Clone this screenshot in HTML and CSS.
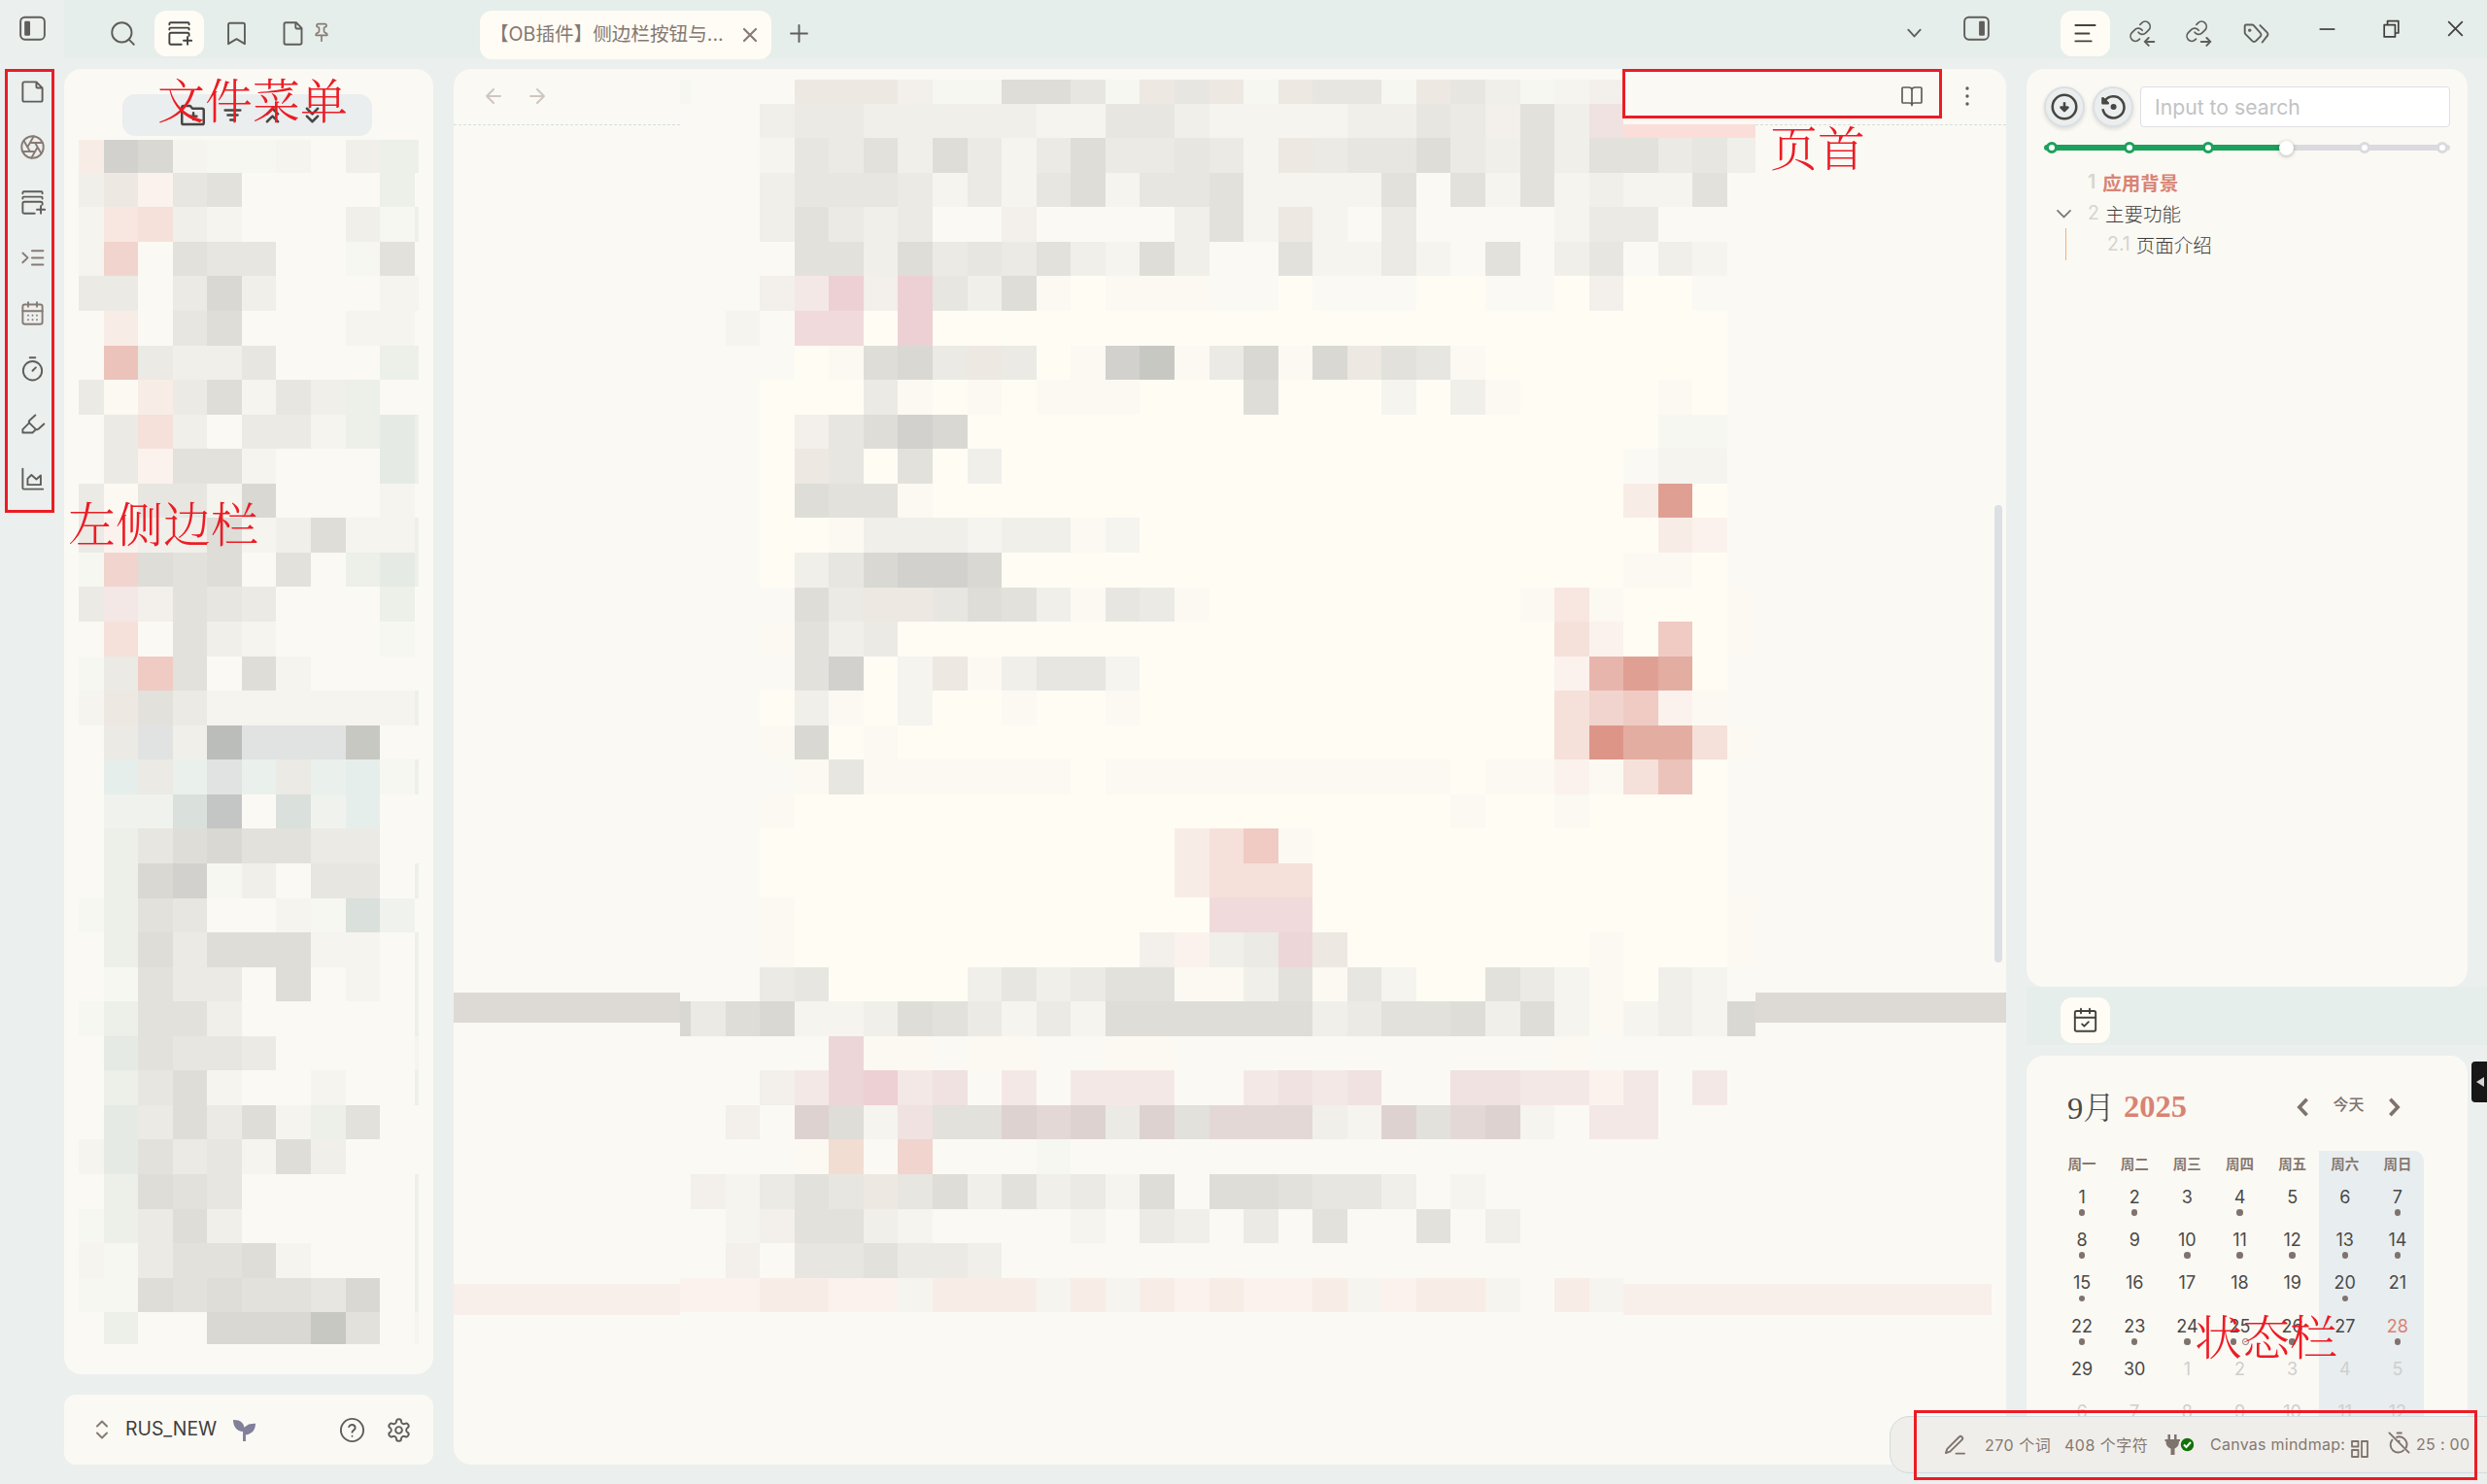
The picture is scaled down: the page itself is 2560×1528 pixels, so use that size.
FILE: index.html
```html
<!DOCTYPE html>
<html lang="zh-CN">
<head>
<meta charset="utf-8">
<title>RUS_NEW</title>
<link rel="stylesheet" href="styles.css">
</head>
<body>
<svg class="defs" aria-hidden="true">
  <symbol id="i-stack" viewBox="0 0 24 24"><path d="M3 3.8V3a1 1 0 0 1 1-1h16a1 1 0 0 1 1 1v.8M3 8.4v-.6a1 1 0 0 1 1-1h16a1 1 0 0 1 1 1v.6M21 14v-1a1.6 1.6 0 0 0-1.600-1.600H4.600A1.600 1.600 0 0 0 3 13v7.400A1.600 1.600 0 0 0 4.600 22H14M19.600 15v7M16 18.500h7.300"/></symbol>
  <symbol id="i-link" viewBox="0 0 24 24"><g transform="translate(-.9 -.8) scale(.9)"><path d="M10 13a5 5 0 0 0 7.540.540l3-3a5 5 0 0 0-7.070-7.070l-1.720 1.710"/><path d="M14 11a5 5 0 0 0-7.540-.540l-3 3a5 5 0 0 0 7.070 7.070l.8-.8"/></g></symbol>
</svg>
<div class="app">
  <nav class="ribbon">
    <svg class="icon toggle" viewBox="0 0 24 24"><rect x="1" y="1.500" width="22" height="20.500" rx="4"/><rect class="solid" x="4.600" y="5" width="5.200" height="13.500" rx="1.200"/></svg>
    <svg class="icon" viewBox="0 0 24 24"><path d="M15.500 3H4.500A1.500 1.500 0 0 0 3 4.500v15A1.500 1.500 0 0 0 4.500 21h15a1.500 1.500 0 0 0 1.500-1.500V8.500ZM15.500 3v4.500a1 1 0 0 0 1 1H21"/></svg>
    <svg class="icon soft" viewBox="0 0 24 24"><circle cx="12" cy="12" r="10"/><path d="m14.310 8 5.740 9.940M9.690 8h11.480M7.380 12l5.740-9.940M9.690 16 3.950 6.060M14.310 16H2.830M16.620 12l-5.740 9.940"/></svg>
    <svg class="icon"><use href="#i-stack"/></svg>
    <svg class="icon soft" viewBox="0 0 24 24"><path d="m3 7.600 4.600 4.300L3 16.200M11.500 5.600h10.200M11.500 12h10.200M11.500 18.200h10.200"/></svg>
    <svg class="icon soft" viewBox="0 0 24 24"><rect x="3" y="4" width="18" height="18" rx="2"/><path d="M8 2v4M16 2v4M3 10h18M8 14h.01M12 14h.01M16 14h.01M8 18h.01M12 18h.01M16 18h.01"/></svg>
    <svg class="icon" viewBox="0 0 24 24"><circle cx="12" cy="14" r="8.600"/><path d="M9.500 2h5M12 14l3-3"/></svg>
    <svg class="icon" viewBox="0 0 24 24"><path d="m9 11-6 6v3h9l3-3"/><path d="m22.500 12-5.100 4.600a2 2 0 0 1-2.800 0l-5.200-5.200a2 2 0 0 1 0-2.800L14.500 4"/></svg>
    <svg class="icon" viewBox="0 0 24 24"><path d="M3 2.500V20a1 1 0 0 0 1 1h17.500M7.500 11.500V17h12V8.500l-4 3.500-4.500-4Z"/></svg>
  </nav>

  <aside class="col files">
    <div class="strip">
      <div class="tab"><svg class="icon" viewBox="0 0 24 24"><circle cx="11" cy="11" r="9"/><path d="m22 22-4.500-4.500"/></svg></div>
      <div class="tab on"><svg class="icon"><use href="#i-stack"/></svg></div>
      <div class="tab"><svg class="icon" viewBox="0 0 24 24"><path d="m19.500 21.500-7.500-4.500-7.500 4.500V4A1.500 1.500 0 0 1 6 2.500h12A1.500 1.500 0 0 1 19.500 4z"/></svg></div>
      <div class="tab"><svg class="icon" viewBox="0 0 24 24"><path d="M15 2H5.500A1.500 1.500 0 0 0 4 3.500v17A1.500 1.500 0 0 0 5.500 22h13a1.500 1.500 0 0 0 1.500-1.500V7ZM14.500 2v4.500a1 1 0 0 0 1 1H20"/></svg></div>
      <svg class="icon soft pin" viewBox="0 0 24 24"><path d="M12 16v7M9 10.760a2 2 0 0 1-1.110 1.790l-1.780.9A2 2 0 0 0 5 15.240V16h14v-.76a2 2 0 0 0-1.110-1.790l-1.780-.9A2 2 0 0 1 15 10.760V7a1 1 0 0 1 1-1 2 2 0 0 0 0-4H8a2 2 0 0 0 0 4 1 1 0 0 1 1 1z"/></svg>
    </div>
    <section class="card tree">
      <div class="tools">
        <svg class="icon" viewBox="0 0 24 24"><path d="M12.500 10v6M9.500 13h6M20.500 20.500a1.500 1.500 0 0 0 1.500-1.500V7.500A1.500 1.500 0 0 0 20.500 6h-8.900L9.600 3.500H3.500A1.500 1.500 0 0 0 2 5v14a1.500 1.500 0 0 0 1.500 1.500Z"/></svg>
        <svg class="icon" viewBox="0 0 24 24"><path d="M5 7.500h14M7.500 12h9M10 16.500h4"/></svg>
        <svg class="icon" viewBox="0 0 24 24"><path d="m17 11-5-5-5 5M17 18l-5-5-5 5"/></svg>
        <svg class="icon" viewBox="0 0 24 24"><path d="m7 6 5 5 5-5M7 13l5 5 5-5"/></svg>
      </div>
      <div class="mosaic" id="tree"></div>
    </section>
    <section class="card vault">
      <svg class="icon soft" viewBox="0 0 24 24"><path d="m7 15.500 5 5 5-5M7 8.500l5-5 5 5"/></svg>
      <span class="name">RUS_NEW</span>
      <svg class="leaf" viewBox="0 0 24 24"><path d="M0 1c7-.5 11.500 3 12 8.500C14 6.500 18 4.700 24 5c0 7-4 11.500-10.500 12V24h-3V13.500C4 13.500 0 8 0 1Z"/></svg>
      <svg class="icon help" viewBox="0 0 24 24"><circle cx="12" cy="12" r="10.300"/><path d="M9 9a3 3 0 0 1 5.800 1c0 2-2.800 2.500-2.800 4M12 17.500h.01"/></svg>
      <svg class="icon" viewBox="0 0 24 24"><path d="M12.220 2h-.44a2 2 0 0 0-2 2v.18a2 2 0 0 1-1 1.730l-.43.25a2 2 0 0 1-2 0l-.15-.08a2 2 0 0 0-2.730.73l-.22.38a2 2 0 0 0 .73 2.730l.15.1a2 2 0 0 1 1 1.720v.51a2 2 0 0 1-1 1.740l-.15.09a2 2 0 0 0-.73 2.730l.22.38a2 2 0 0 0 2.730.73l.15-.08a2 2 0 0 1 2 0l.43.25a2 2 0 0 1 1 1.730V20a2 2 0 0 0 2 2h.44a2 2 0 0 0 2-2v-.18a2 2 0 0 1 1-1.730l.43-.25a2 2 0 0 1 2 0l.15.08a2 2 0 0 0 2.730-.73l.22-.39a2 2 0 0 0-.73-2.730l-.15-.08a2 2 0 0 1-1-1.740v-.5a2 2 0 0 1 1-1.740l.15-.09a2 2 0 0 0 .73-2.730l-.22-.38a2 2 0 0 0-2.730-.73l-.15.08a2 2 0 0 1-2 0l-.43-.25a2 2 0 0 1-1-1.730V4a2 2 0 0 0-2-2z"/><circle cx="12" cy="12" r="3"/></svg>
    </section>
  </aside>

  <main class="col editor">
    <div class="strip">
      <div class="doc-tab"><span>【OB插件】侧边栏按钮与...</span><svg class="icon soft" viewBox="0 0 24 24"><path d="M18 6 6 18M6 6l12 12"/></svg></div>
      <svg class="icon plus" viewBox="0 0 24 24"><path d="M4.500 12h15M12 4.500v15"/></svg>
      <svg class="icon more-tabs" viewBox="0 0 24 24"><path d="m6.500 9.500 5.500 6 5.500-6"/></svg>
      <svg class="icon toggle" viewBox="0 0 24 24"><rect x="1" y="1.500" width="22" height="20.500" rx="4"/><rect class="solid" x="14.300" y="5" width="5.200" height="13.500" rx="1.200"/></svg>
    </div>
    <section class="card note">
      <header class="note-head">
        <svg class="icon faint" viewBox="0 0 24 24"><path d="m12 19-7-7 7-7M19 12H5"/></svg>
        <svg class="icon faint" viewBox="0 0 24 24"><path d="M5 12h14M12 5l7 7-7 7"/></svg>
        <svg class="icon book" viewBox="0 0 24 24"><path d="M12 6v15.500M12 5.500A3 3 0 0 0 9 3H3a1 1 0 0 0-1 1v14a1 1 0 0 0 1 1h6.500a2.500 2.500 0 0 1 2.500 2 2.500 2.500 0 0 1 2.500-2H21a1 1 0 0 0 1-1V4a1 1 0 0 0-1-1h-6a3 3 0 0 0-3 2.500"/></svg>
        <svg class="icon" viewBox="0 0 24 24"><g class="solid"><circle cx="12" cy="4" r="1.700"/><circle cx="12" cy="12" r="1.700"/><circle cx="12" cy="20" r="1.700"/></g></svg>
      </header>
      <div class="band"></div>
      <div class="band rose"></div>
      <div class="mosaic" id="note"></div>
      <div class="scroll"></div>
    </section>
  </main>

  <aside class="col side">
    <div class="strip">
      <div class="tab on"><svg class="icon" viewBox="0 0 24 24"><path d="M3 4.500h18M3 12h12.500M3 19h14.500"/></svg></div>
      <div class="tab"><svg class="icon" viewBox="0 0 24 24"><use href="#i-link"/><path d="M22.500 19.500h-8M17.500 16 14 19.500l3.500 3.500"/></svg></div>
      <div class="tab"><svg class="icon" viewBox="0 0 24 24"><use href="#i-link"/><path d="M14 19.500h8M19 16l3.500 3.500L19 23"/></svg></div>
      <div class="tab"><svg class="icon" viewBox="0 0 24 24"><path d="m15.500 4.500 6.400 6.500a2.400 2.400 0 0 1 0 3.400L17.500 20"/><path d="M9.600 4.600A2 2 0 0 0 8.200 4H2.500a1 1 0 0 0-1 1v6.200a2 2 0 0 0 .6 1.400l6.200 6.200a2.400 2.400 0 0 0 3.400 0l4-4a2.400 2.400 0 0 0 0-3.400z"/><circle cx="6" cy="9" r=".7"/></svg></div>
      <div class="win">
        <svg class="icon" viewBox="0 0 24 24"><path d="M5 12.500h14"/></svg>
        <svg class="icon" viewBox="0 0 24 24"><path d="M5.500 8.500h10v11h-10zM8.500 8.500v-3.500h10v11h-3"/></svg>
        <svg class="icon" viewBox="0 0 24 24"><path d="m5.500 5.500 13 13M18.500 5.500l-13 13"/></svg>
      </div>
    </div>
    <section class="card outline">
      <div class="find">
        <button class="round"><svg viewBox="0 0 24 24"><circle cx="12" cy="12" r="10.500"/><path d="M12 8v7M9 12.500l3 3 3-3z"/></svg></button>
        <button class="round"><svg viewBox="0 0 24 24"><path d="M4.500 7A9.500 9.500 0 1 1 3 14"/><path d="M3 4.500v4.200h4.500z"/><circle class="solid" cx="12.500" cy="12" r="1.500"/></svg></button>
        <div class="input">Input to search</div>
      </div>
      <div class="slider"><i class="dot"></i><i class="dot"></i><i class="dot"></i><i class="handle"></i><i class="dot off"></i><i class="dot off"></i></div>
      <div class="item cur"><b>1</b><span>应用背景</span></div>
      <div class="item open"><svg viewBox="0 0 24 24"><path d="m4 8.500 8 8 8-8"/></svg><b>2</b><span>主要功能</span></div>
      <div class="item sub"><b>2.1</b><span>页面介绍</span></div>
    </section>
    <div class="strip low">
      <div class="tab on"><svg class="icon" viewBox="0 0 24 24"><rect x="2.500" y="3.500" width="19" height="18.500" rx="1.500"/><path d="M8 1.500v4M16 1.500v4M2.500 9.500h19M9 15.500l2 2 4-4"/></svg></div>
    </div>
    <section class="card cal">
      <header class="cal-head">
        <span class="month">9月</span><span class="year">2025</span>
        <svg viewBox="0 0 16 24"><path d="M12.500 3 4 12l8.500 9"/></svg>
        <span class="today">今天</span>
        <svg viewBox="0 0 16 24"><path d="M3.500 3 12 12l-8.500 9"/></svg>
      </header>
      <div class="days" id="days"></div>
    </section>
  </aside>
</div>

<footer class="status">
  <svg class="icon" viewBox="0 0 24 24"><path d="M13 21.500h9M16.400 3.600a2.200 2.200 0 0 1 3.100 3.100L6.500 19.500 2 21l1.500-4.500z"/></svg>
  <span class="words">270 个词</span>
  <span class="chars">408 个字符</span>
  <svg class="plug" viewBox="0 0 30 21"><path d="M3.500 0h2.500v5h4V0h2.500v5H16v2h-1c0 4-1.500 6-4.500 7.500V21h-4v-6.500C3 13 1.500 11 1.500 7h-1V5h3z"/><circle cx="23.500" cy="10.500" r="6.700"/><path class="tick" d="m20 10.500 2.500 2.500 4.500-5"/></svg>
  <span class="mind">Canvas mindmap:</span>
  <svg class="icon boards" viewBox="0 0 18 18"><rect x="1" y="1" width="6.500" height="5.500"/><rect x="1" y="10" width="6.500" height="7"/><rect x="11" y="1" width="6" height="16"/></svg>
  <svg class="icon clock" viewBox="0 0 24 24"><path d="M10 1.500h4.500M4.600 9a8.300 8.300 0 0 0 12.200 11.200M9.500 6a8.300 8.300 0 0 1 10.200 11M1.500 1.500l21 21M12 12v-2"/></svg>
  <span class="time">25 : 00</span>
</footer>
<div class="drawer"></div>

<div class="frame f-ribbon"></div>
<div class="frame f-head"></div>
<div class="frame f-status"></div>
<div class="label l-menu">文件菜单</div>
<div class="label l-ribbon">左侧边栏</div>
<div class="label l-head">页首</div>
<div class="label l-status">状态栏</div>
<script src="script.js"></script>
</body>
</html>
```
FILE: styles.css
```css
* { box-sizing: border-box; }
body {
  margin: 0;
  width: 2560px;
  height: 1528px;
  overflow: hidden;
  position: relative;
  background: #ebefee;
  color: #4a4947;
  font-family: Inter, "Noto Sans CJK SC", sans-serif;
}
.defs { position: absolute; width: 0; height: 0; }
.app { display: flex; height: 1528px; }
.icon {
  width: 27px;
  height: 27px;
  flex: none;
  fill: none;
  stroke: #5f5e5a;
  stroke-width: 1.7;
  stroke-linecap: round;
  stroke-linejoin: round;
}
.icon .solid { fill: #5f5e5a; stroke: none; }
.icon.soft { stroke: #877b74; }
.icon.faint { stroke: #cfc6c0; width: 24px; height: 24px; stroke-width: 2; }

.ribbon { width: 66px; flex: none; display: flex; flex-direction: column; align-items: center; gap: 30px; padding-top: 16px; }
.ribbon .toggle { margin-bottom: 7.500px; }

.col { display: flex; flex-direction: column; flex: none; }
.files { width: 401px; }
.editor { width: 1619px; }
.side { width: 474px; }
.strip { height: 60px; flex: none; background: #e5eeea; display: flex; align-items: flex-start; padding-top: 11px; }
.files .strip { padding-left: 34.500px; gap: 7.500px; }
.tab { width: 51px; height: 47px; border-radius: 12px; display: flex; align-items: center; justify-content: center; flex: none; }
.tab.on { background: #fffcf5; }
.tab.on .icon { stroke: #43423f; }
.pin { width: 20px; height: 20px; margin: 12px 0 0 -13.500px; stroke-width: 2; }
.card { background: #fbf9f4; border-radius: 18px; flex: none; position: relative; }

.tree { width: 380px; height: 1344px; margin-top: 11px; padding: 26px 0 0 15px; }
.tools { width: 257px; height: 43px; margin: 0 0 4px 45px; padding-left: 11px; background: #ebeeee; border-radius: 13px; display: flex; align-items: center; justify-content: center; gap: 13.700px; }
.tools .icon { stroke: #474642; stroke-width: 2.200; }
.mosaic { display: grid; justify-content: start; align-content: start; }
.vault { width: 380px; height: 72px; margin-top: 21px; border-radius: 12px; display: flex; align-items: center; padding: 0 22px 0 27px; }
.vault > .icon:first-child { width: 24px; height: 24px; stroke-width: 2; }
.name { font-size: 19.400px; margin: -3px 17px 0 12px; color: #3f3e3c; }
.leaf { width: 23px; height: 23px; fill: #81809b; }
.help { margin-left: auto; margin-right: 21px; }

.editor .strip { padding-left: 27px; }
.doc-tab { width: 300px; height: 50px; background: #fffcf5; border-radius: 12px; display: flex; align-items: center; padding: 0 10px 0 10px; color: #857870; font-size: 19.600px; white-space: nowrap; }
.doc-tab span { margin-top: -5px; }
.doc-tab .icon { width: 24px; height: 24px; stroke-width: 2.200; margin-left: auto; }
.plus { margin: 10px 0 0 15px; }
.more-tabs { margin: 9px 37px 0 auto; }
.strip .toggle { margin: 5px 38px 0 0; }
.note { width: 1598px; height: 1437px; margin-top: 11px; overflow: hidden; }
.note-head { height: 58px; border-bottom: 1px dashed #d3dee1; display: flex; align-items: center; padding: 0 28px 1px 29px; gap: 21px; }
.note-head .icon { width: 24px; height: 24px; }
.note-head .book { margin-left: auto; margin-right: 12px; }
.band { height: 31px; margin-top: 893px; background: #dddad5; }
.band.rose { height: 32px; margin-top: 269px; margin-right: 15px; background: #f8eeea; }
.note .mosaic { position: absolute; left: 233px; top: 11px; }
.scroll { position: absolute; right: 4px; top: 449px; width: 8px; height: 471px; border-radius: 4px; background: #dce0e4; }

.side .strip { padding-left: 35px; gap: 7.500px; }
.win { margin-left: auto; display: flex; gap: 39px; padding: 5px 19px 0 0; }
.win .icon { stroke: #3f3f3d; stroke-width: 1.500; stroke-linecap: butt; }
.side .card { width: 454px; margin-top: 11px; }
.outline { height: 945px; padding: 18px 18px 0; }
.find { display: flex; height: 42px; align-items: center; }
.round { width: 42px; height: 42px; border-radius: 50%; border: 2px solid #dcdfe2; background: #ebeeee; padding: 0; margin-right: 8px; display: flex; align-items: center; justify-content: center; box-shadow: 0 2px 4px rgba(0,0,0,.12); }
.round svg { width: 28px; height: 28px; fill: none; stroke: #474642; stroke-width: 2.200; stroke-linejoin: round; }
.round .solid { fill: #474642; }
.input { width: 319px; height: 42px; margin-left: -1px; background: #fff; border: 1px solid #dfdfe4; border-radius: 4px; padding-left: 14px; font-size: 21.200px; line-height: 40px; color: #c2c2c4; }
.slider { height: 6px; margin-top: 18px; border-radius: 3px; background: linear-gradient(90deg, #1ba15b 60%, #dbdadf 60%); display: flex; align-items: center; justify-content: space-between; padding: 0 2px; }
.dot { width: 12px; height: 12px; border: 3px solid #1ba15b; border-radius: 50%; background: #fff; }
.dot.off { border-color: #dbdadf; }
.handle { width: 15px; height: 15px; border-radius: 50%; background: #fff; box-shadow: 0 1px 4px rgba(0,0,0,.3); margin: 0 -1.500px; }
.item { height: 32.200px; display: flex; align-items: center; font-size: 19.500px; font-weight: 300; padding-left: 45px; color: #3d3c3a; }
.item b { font-weight: 400; color: #d5d4cf; margin-right: 6px; }
.item.cur { margin-top: 16px; color: #d88373; font-weight: 700; }
.item.cur b { font-weight: 600; margin-right: 7px; }
.item.open { padding-left: 10px; }
.item.open svg { width: 21px; height: 21px; margin-right: 14px; fill: none; stroke: #777b80; stroke-width: 2; }
.item.sub { margin-left: 22px; padding-left: 42px; border-left: 1px solid #f3b073; }
.side .low { padding-left: 35px; }
.cal { height: 421px; overflow: hidden; padding-left: 30px; }
.cal-head { display: flex; align-items: center; height: 98px; padding: 7px 0 0 12px; font-family: "Liberation Serif", "Noto Serif CJK SC", "Noto Sans CJK SC", serif; font-size: 32.500px; }
.month { width: 58px; font-weight: 300; white-space: nowrap; margin-top: -4px; }
.year { width: 177px; color: #d88373; font-weight: 700; }
.cal-head svg { width: 15px; height: 22px; fill: none; stroke: #7f736d; stroke-width: 4; }
.today { width: 79px; text-align: center; font: 500 16px "Noto Sans CJK SC", sans-serif; color: #7f736d; margin-top: -8px; }
.days { width: 379px; display: grid; grid-template-columns: repeat(7, 1fr); grid-template-rows: 26px; grid-auto-rows: 44.400px; }
.days > div { display: flex; flex-direction: column; align-items: center; }
.days .wd { font-size: 14.500px; font-weight: 700; line-height: 28px; color: #857870; }
.days .d { font-size: 18px; line-height: 22px; padding-top: 10.500px; color: #4a4947; }
.days .we { background: #e8edf0; }
.days .wd.last { border-top-right-radius: 10px; }
.days .out { color: #cfcfcc; }
.days .now { color: #d88373; }
.marks { display: flex; gap: 6px; margin-top: 1.500px; }
.marks i { width: 6.500px; height: 6.500px; border-radius: 50%; background: #7f736d; }
.marks i.ring { background: none; border: 1.500px solid #7f736d; }

.status { position: absolute; left: 1945px; top: 1458px; width: 640px; height: 59px; background: #f0eeea; border: 1px solid #cfdbe0; border-radius: 20px; display: flex; align-items: center; padding-left: 55px; font-size: 16px; letter-spacing: .5px; color: #857870; white-space: nowrap; }
.status span { margin-top: -2px; }
.status .icon { width: 23px; height: 23px; stroke: #7f736d; stroke-width: 2; }
.status .words { width: 82px; margin-left: 19px; }
.chars { width: 103px; }
.plug { width: 30px; height: 21px; margin-right: 17px; fill: #7f736d; }
.plug circle { fill: #127208; }
.plug .tick { fill: none; stroke: #fff; stroke-width: 2; }
.mind { width: 145px; letter-spacing: .25px; }
.status .boards { width: 18px; height: 18px; margin: 9px 20px 0 0; stroke-width: 1.800; }
.status .clock { margin: -4px 6px 0 0; }
.status .time { letter-spacing: .3px; }
.drawer { position: absolute; right: 0; top: 1093px; width: 16px; height: 42px; background: #171717; border-radius: 4px 0 0 4px; display: flex; align-items: center; justify-content: flex-end; padding-right: 3px; }
.drawer::before { content: ""; border: 5.500px solid transparent; border-left: 0; border-right: 8px solid #d4d4d4; }

.frame { position: absolute; border: 3px solid #ec1c24; }
.f-ribbon { left: 5px; top: 71px; width: 51px; height: 457px; }
.f-head { left: 1670px; top: 71px; width: 329px; height: 51px; }
.f-status { left: 1970px; top: 1452px; width: 580px; height: 72px; }
.label { position: absolute; color: #ec1c24; font: 300 49px/56px "Noto Serif CJK SC", "Noto Sans CJK SC", serif; white-space: nowrap; }
.l-menu { left: 162px; top: 73px; }
.l-ribbon { left: 70px; top: 509px; }
.l-head { left: 1822px; top: 122px; }
.l-status { left: 2259px; top: 1346px; }
```
FILE: script.js
```js
const palette = {
  '.': '#fbf9f4', _: 'transparent', c: '#fffcf4', d: '#fcf9f2', g: '#f6f7f1', h: '#edefe9', H: '#f0f2ee',
  i: '#e6eae4', j: '#e6eeec', J: '#eaf0ec', e: '#e0e3e1', E: '#dae0dc', f: '#c3c6c5', b: '#bbbdba',
  1: '#f5f4ef', 2: '#f0efea', 3: '#ebeae5', 4: '#e7e6e1', 5: '#e2e1dc', 6: '#deddd8', 7: '#d9d8d3', 8: '#d2d1cd', 9: '#c8c8c3',
  x: '#ede8e2', X: '#f3efea', z: '#fbf2ed', k: '#f8ede6', K: '#f7e7e0', l: '#f5e1da', L: '#f2ddd3', m: '#f1d4cd',
  M: '#efcbc3', n: '#ebc3bb', O: '#e8b5ad', o: '#e3ada2', p: '#dfa093', q: '#dd9588',
  r: '#f4e8e6', s: '#f1dadb', S: '#ecd6d8', t: '#edd0d3', u: '#ded2d0', v: '#e4d8d6', w: '#efe2e0', y: '#fbdeda'
};

function mosaic(id, xs, ys, rows) {
  const sizes = a => a.slice(1).map((v, n) => v - a[n] + 'px').join(' ');
  const box = document.getElementById(id);
  box.style.gridTemplateColumns = sizes(xs);
  box.style.gridTemplateRows = sizes(ys);
  for (const row of rows) {
    for (const key of row.replace(/ /g, '')) {
      const cell = document.createElement('div');
      cell.style.background = palette[key];
      box.append(cell);
    }
  }
}

mosaic('tree',
  [81, 107, 142, 178, 213, 249, 284, 320, 356, 391, 427, 431],
  [144, 178, 213, 249, 284, 320, 356, 391, 427, 462, 498, 533, 569, 604, 640, 676, 711, 747, 782, 818, 853, 889,
   925, 960, 996, 1031, 1067, 1102, 1138, 1173, 1209, 1245, 1280, 1316, 1351, 1384],
  ['k871 gg1. 2hh', '2xz4 5... .h.', '1Kl2 1... 2gh', '1m.5 44.. g5.', '33.3 72.. .11', '.k.4 6... 11.',
   '.n32 24.. .hh', '3dk3 6142 h..', '.3l2 .331 hih', '.3z5 51.. .ih', '3d44 17.. .1.', '3z22 6126 11h',
   'gm65 6.5. hih', '3rX5 43.. .h.', '.l.5 21.. .g.', 'g3M5 .61. ...', '1x53 1111 11h', '.3e2 beee 9..',
   '.j3J eJ3J jgh', '.HHE f.EH j..', '.h46 7553 3..', '.h78 g2.4 4.h', 'gh54 ..1g EH.', '.h63 6661 1.h',
   '.g53 3.6. 1.h', 'gh55 2... ..h', '.i54 43.. ..1', '.h46 1..1 ..h', '.i36 361h 5..', '1i53 4162 ...',
   '.h65 4... ..h', 'gh36 2... ..h', '1g35 561. ..h', 'gg65 6554 7.h', '.h.. 7779 5.1']);

mosaic('note',
  [700, 711, 747, 782, 818, 853, 889, 924, 960, 996, 1031, 1067, 1102, 1138, 1173, 1209, 1245, 1280, 1316, 1351,
   1387, 1422, 1458, 1493, 1529, 1565, 1600, 1636, 1671, 1707, 1742, 1778, 1807],
  [82, 107, 128, 142, 178, 213, 249, 284, 320, 356, 391, 427, 462, 498, 533, 569, 605, 640, 676, 711, 747, 782, 818,
   853, 889, 924, 960, 996, 1031, 1067, 1102, 1138, 1173, 1209, 1245, 1280, 1316, 1351, 1354],
  ['g... xxxX gg66 4gx4 xgx4 4gx4 2g1X ....',
   '...2 3322 2221 1442 1111 2243 X52w ....',
   '...2 3322 2221 1442 1111 2243 X52w yyyy',
   '...1 4352 6313 6334 31x3 4463 2525 5342',
   '...2 4443 1314 6144 5111 15.5 1512 115.',
   '...2 5323 ..X. ...2 51x1 .3.. ..13 3...',
   '.... 5526 3435 2162 ..51 131. 5.24 .21.',
   '...X rtXt 426d cddd ..c. ..cc ..cX cc..',
   '..1. ssct cccc cccc cccc cccc cccc ccc.',
   '.... cd67 3x3c d89d 37d7 x54d cccc ccc.',
   '...c cc3d cdcd ddcc c6cc c1c2 dccc cdc.',
   '...c X468 7ccc cccc cccc cccc cccc cgg.',
   '...c x4c5 c2cc cccc cccc cccc cccc .11.',
   '...c 655d cccc cccc cccc cccc cccc kpc.',
   '...c cd22 2122 d1cc cccc cccc cccc ckz.',
   '...c 2478 87cc cccc cccc cccc cccc ddc.',
   '.... 63xx 4652 d43d cccc cccc cdKd cccd',
   '...d 523c cccc cccc cccc cccc cclz cMcd',
   '.... 58c1 xd24 41cc cccc cccc cczO poc.',
   '...c 2dc1 ccdc cdcc cccc cccc cclm Mzd.',
   '...d 7cdc cccc cccc cccc cccc cclq oold',
   '.... d4dd dddd cddd dddd dddc ddzd lnc.',
   '...d cccc cccc cccc cccc cccd ccdc ccc.',
   '...c cccc cccc ccck lMdc cccc cccc ccc.',
   '...c cccc cccc ccck lllc cccc cccc ccc.',
   '...d cccc cccc cccc sssc cccc cccc cccd',
   '...d cccc cccc ccXz 23Sx cccc cccd cccd',
   '...3 4ccc c242 355d d25d 41cc 531d c21.',
   '7367 1126 5313 1666 6662 3556 261d 1217',
   '.... .Sdd .dd. .dd. .... .... ..d. ....',
   '...X rStr w.r. rrr. .rwr w..w wrrz r.r.',
   '..X. u61w 55uv u3u5 vvv2 1u5v u1.r r...',
   '.... dL.m ...g .... .... .... .... ....',
   '.X13 54x4 6252 316. 6654 42.1 .... ....',
   '..1X 5521 .... 1.32 .3.5 ..5. 2... ....',
   '..X. 4453 32.. .... .... .... .... ....',
   'zzzk kzz1 kkk1 k1kz kzzk 1zkk 1.k1 ____',
   '.... .... .... .... .... .... .... ____']);

const names = ['周一', '周二', '周三', '周四', '周五', '周六', '周日'];
const marked = [1, 2, 4, 7, 8, 10, 11, 12, 13, 14, 15, 20, 22, 23, 24, 25, 26, 28];
const days = document.getElementById('days');
names.forEach((name, n) => {
  days.insertAdjacentHTML('beforeend', `<div class="wd${n > 4 ? ' we' : ''}${n === 6 ? ' last' : ''}">${name}</div>`);
});
for (let n = 1; n <= 42; n++) {
  const out = n > 30;
  const cls = ['d', (n - 1) % 7 > 4 && 'we', out && 'out', n === 28 && 'now'].filter(Boolean).join(' ');
  const dots = marked.includes(n) ? `<span class="marks"><i></i>${n === 25 ? '<i class="ring"></i>' : ''}</span>` : '';
  days.insertAdjacentHTML('beforeend', `<div class="${cls}">${out ? n - 30 : n}${dots}</div>`);
}
```
